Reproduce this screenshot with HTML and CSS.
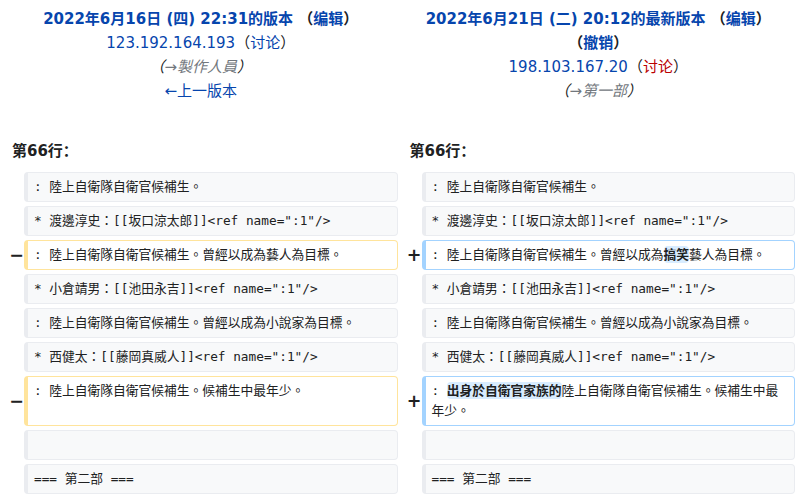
FILE: index.html
```html
<!DOCTYPE html>
<html lang="zh-Hans">
<head>
<meta charset="utf-8">
<title>差异</title>
<link rel="stylesheet" href="styles.css">
</head>
<body>
<div class="diff">
  <div class="title">
    <div class="title-main"><a class="link">2022年6月16日 (四) 22:31的版本</a> <span class="tool">（<a class="link">编辑</a>）</span></div>
    <div><a class="link">123.192.164.193</a>（<a class="link">讨论</a>）</div>
    <div class="comment">（<span class="autocomment" lang="zh-Hant">→製作人員</span>）</div>
    <div><a class="link">←上一版本</a></div>
  </div>
  <div class="title">
    <div class="title-main"><a class="link">2022年6月21日 (二) 20:12的最新版本</a> <span class="tool">（<a class="link">编辑</a>）</span> <span class="tool">（<a class="link">撤销</a>）</span></div>
    <div><a class="link">198.103.167.20</a>（<a class="link new">讨论</a>）</div>
    <div class="comment">（<span class="autocomment" lang="zh-Hant">→第一部</span>）</div>
  </div>

  <div class="lineno">第66行：</div>
  <div class="lineno">第66行：</div>

  <div class="marker"></div>
  <div class="line ctx" lang="zh-Hant">: 陸上自衛隊自衛官候補生。</div>
  <div class="marker"></div>
  <div class="line ctx" lang="zh-Hant">: 陸上自衛隊自衛官候補生。</div>

  <div class="marker"></div>
  <div class="line ctx" lang="zh-Hant">* 渡邊淳史：[[坂口涼太郎]]&lt;ref name=":1"/&gt;</div>
  <div class="marker"></div>
  <div class="line ctx" lang="zh-Hant">* 渡邊淳史：[[坂口涼太郎]]&lt;ref name=":1"/&gt;</div>

  <div class="marker">−</div>
  <div class="line del" lang="zh-Hant">: 陸上自衛隊自衛官候補生。曾經以成為藝人為目標。</div>
  <div class="marker">+</div>
  <div class="line add" lang="zh-Hant">: 陸上自衛隊自衛官候補生。曾經以成為<span class="change">搞笑</span>藝人為目標。</div>

  <div class="marker"></div>
  <div class="line ctx" lang="zh-Hant">* 小倉靖男：[[池田永吉]]&lt;ref name=":1"/&gt;</div>
  <div class="marker"></div>
  <div class="line ctx" lang="zh-Hant">* 小倉靖男：[[池田永吉]]&lt;ref name=":1"/&gt;</div>

  <div class="marker"></div>
  <div class="line ctx" lang="zh-Hant">: 陸上自衛隊自衛官候補生。曾經以成為小說家為目標。</div>
  <div class="marker"></div>
  <div class="line ctx" lang="zh-Hant">: 陸上自衛隊自衛官候補生。曾經以成為小說家為目標。</div>

  <div class="marker"></div>
  <div class="line ctx" lang="zh-Hant">* 西健太：[[藤岡真威人]]&lt;ref name=":1"/&gt;</div>
  <div class="marker"></div>
  <div class="line ctx" lang="zh-Hant">* 西健太：[[藤岡真威人]]&lt;ref name=":1"/&gt;</div>

  <div class="marker">−</div>
  <div class="line del" lang="zh-Hant">: 陸上自衛隊自衛官候補生。候補生中最年少。</div>
  <div class="marker">+</div>
  <div class="line add" lang="zh-Hant">: <span class="change">出身於自衛官家族的</span>陸上自衛隊自衛官候補生。候補生中最年少。</div>

  <div class="marker"></div>
  <div class="line ctx"></div>
  <div class="marker"></div>
  <div class="line ctx"></div>

  <div class="marker"></div>
  <div class="line ctx" lang="zh-Hant">=== 第二部 ===</div>
  <div class="marker"></div>
  <div class="line ctx" lang="zh-Hant">=== 第二部 ===</div>
</div>
</body>
</html>
```

FILE: styles.css
```css
html, body {
  margin: 0;
  padding: 0;
  background: #ffffff;
}

body {
  font-family: "DejaVu Sans", "Noto Sans CJK SC", sans-serif;
  color: #202122;
  font-size: 14px;
}

.diff {
  display: grid;
  grid-template-columns: 16px 1fr 16px 1fr;
  gap: 4px;
  padding: 4px;
}

.title {
  grid-column: span 2;
  text-align: center;
  font-size: 15px;
  line-height: 24px;
  padding: 3px 0 33px;
}

.title-main {
  font-weight: bold;
}

.tool {
  white-space: nowrap;
}

.link {
  color: #0645ad;
  text-decoration: none;
}

.link.new {
  color: #ba0000;
}

.comment {
  font-style: italic;
}

.autocomment {
  color: #72777d;
  font-family: "DejaVu Sans", "Noto Sans CJK TC", sans-serif;
}

.lineno {
  grid-column: span 2;
  font-family: "DejaVu Sans", "Noto Sans CJK TC", sans-serif;
  font-weight: bold;
  font-size: 15px;
  line-height: 22px;
  padding: 0 8px 6px;
}

.marker {
  align-self: center;
  text-align: right;
  margin-right: -4px;
  font-weight: bold;
  font-size: 17.5px;
  line-height: 20px;
}

.line {
  font-family: "DejaVu Sans Mono", "Noto Sans CJK TC", monospace;
  font-size: 12.75px;
  line-height: 20px;
  min-height: 20px;
  padding: 4px 6px;
  border-style: solid;
  border-width: 1px 1px 1px 4px;
  border-radius: 4px;
  white-space: pre-wrap;
  overflow-wrap: break-word;
}

.ctx {
  background: #f8f9fa;
  border-color: #eaecf0;
}

.del {
  background: #ffffff;
  border-color: #ffe49c;
}

.add {
  background: #ffffff;
  border-color: #a3d3ff;
}

.change {
  font-weight: bold;
  border-radius: 4px;
  padding: 1px 0;
}

.add .change {
  background: #d8ecff;
}

.del .change {
  background: #feeec8;
}
```
